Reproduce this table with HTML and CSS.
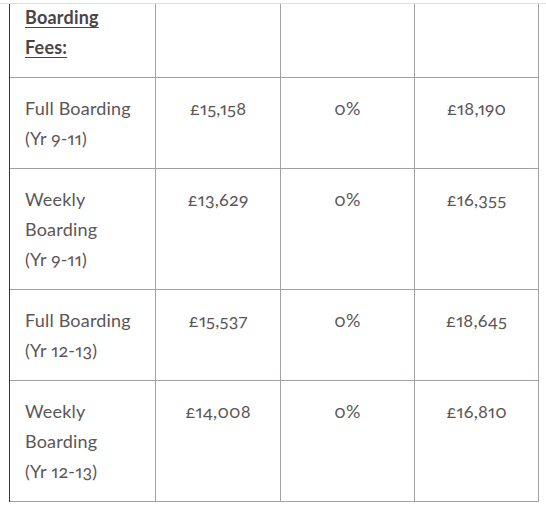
FILE: index.html
```html
<!DOCTYPE html>
<html lang="en">
<head>
<meta charset="utf-8">
<title>Boarding Fees</title>
<link rel="stylesheet" href="styles.css">
</head>
<body>
<div class="rule"></div>
<div class="clip">
  <div class="fees" role="table">
    <div class="cell head" role="cell"><strong><u>Boarding</u><br><u>Fees:</u></strong></div>
    <div class="cell num" role="cell"></div>
    <div class="cell num" role="cell"></div>
    <div class="cell num" role="cell"></div>

    <div class="cell label" role="cell">Full Boarding<br>(Yr 9-11)</div>
    <div class="cell num" role="cell">£15,158</div>
    <div class="cell num" role="cell">0%</div>
    <div class="cell num" role="cell">£18,190</div>

    <div class="cell label" role="cell">Weekly<br>Boarding<br>(Yr 9-11)</div>
    <div class="cell num" role="cell">£13,629</div>
    <div class="cell num" role="cell">0%</div>
    <div class="cell num" role="cell">£16,355</div>

    <div class="cell label" role="cell">Full Boarding<br>(Yr 12-13)</div>
    <div class="cell num" role="cell">£15,537</div>
    <div class="cell num" role="cell">0%</div>
    <div class="cell num" role="cell">£18,645</div>

    <div class="cell label" role="cell">Weekly<br>Boarding<br>(Yr 12-13)</div>
    <div class="cell num" role="cell">£14,008</div>
    <div class="cell num" role="cell">0%</div>
    <div class="cell num" role="cell">£16,810</div>
  </div>
</div>
</body>
</html>
```
FILE: styles.css
```css
html, body {
  margin: 0;
  padding: 0;
  background: #ffffff;
}
body {
  font-family: Lato, "Open Sans", sans-serif;
  font-size: 18px;
  letter-spacing: 0.2px;
  line-height: 30px;
  color: #5b5657;
  font-variant-numeric: oldstyle-nums proportional-nums;
}
.rule {
  margin-top: 3px;
  height: 1px;
  background: #e2e2e2;
}
.clip {
  margin-left: 9px;
  width: 530px;
  height: 499px;
  overflow: hidden;
}
.fees {
  margin-top: -17px;
  display: grid;
  grid-template-columns: 146px 125px 134px 124px;
  border-left: 1px solid #3a3535;
}
.cell {
  box-sizing: border-box;
  padding: 15px 15px;
  white-space: nowrap;
  border-right: 1px solid #a49fa2;
  border-bottom: 1px solid #a49fa2;
}
.num {
  text-align: center;
}
.head {
  color: #4a4445;
}
.head u {
  text-decoration-thickness: 1px;
  text-underline-offset: 3px;
}
```
